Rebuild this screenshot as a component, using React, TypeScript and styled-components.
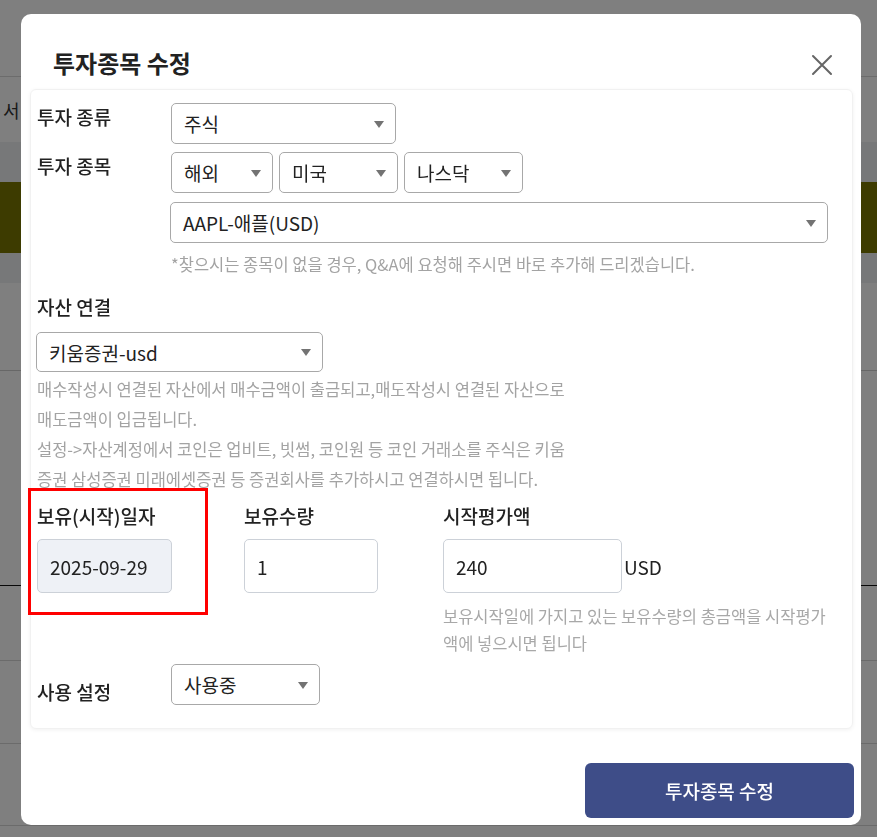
import styled, { createGlobalStyle } from "styled-components"

const GlobalStyle = createGlobalStyle`
  * {
    box-sizing: border-box;
  }
  body {
    margin: 0;
    background: #fff;
    font-family: "Noto Sans CJK KR", "Noto Sans", sans-serif;
  }
`

interface SelectProp {
  text: string
  width: number
  height?: number
}

function FakeSelect({ text, width, height = 41 }: SelectProp) {
  return (
    <SelectBox $w={width} $h={height}>
      {text}
    </SelectBox>
  )
}

function CloseIcon() {
  return (
    <svg width="22" height="22" viewBox="0 0 22 22">
      <path d="M2 2 L20 20 M20 2 L2 20" stroke="#666" strokeWidth="2" strokeLinecap="round" />
    </svg>
  )
}

export default function App() {
  return (
    <>
      <GlobalStyle />
      <Page>
        <TopBar />
        <TabRow>서</TabRow>
        <Band $h={40} />
        <OliveBar />
        <Band $h={30} />
        <ListRow $h={88} $line="#cfcfcf" />
        <ListRow $h={215} $line="#111" />
        <ListRow $h={75} $line="#d6d6d6" />
        <ListRow $h={83} $line="#d6d6d6" />
        <ListRow $h={82} $line="#d6d6d6" />
      </Page>

      <Overlay>
        <Modal>
          <Header>
            <Title>투자종목 수정</Title>
            <CloseBT type="button" aria-label="닫기">
              <CloseIcon />
            </CloseBT>
          </Header>

          <Card>
            <FieldRow>
              <Label>투자 종류</Label>
              <FakeSelect text="주식" width={225} />
            </FieldRow>

            <FieldRow $gap={8}>
              <Label>투자 종목</Label>
              <Stack>
                <SelectGroup>
                  <FakeSelect text="해외" width={102} />
                  <FakeSelect text="미국" width={119} />
                  <FakeSelect text="나스닥" width={119} />
                </SelectGroup>
                <WideSlot>
                  <FakeSelect text="AAPL-애플(USD)" width={658} />
                </WideSlot>
                <Note>*찾으시는 종목이 없을 경우, Q&amp;A에 요청해 주시면 바로 추가해 드리겠습니다.</Note>
              </Stack>
            </FieldRow>

            <Section>
              <Label>자산 연결</Label>
              <SectionSlot>
                <FakeSelect text="키움증권-usd" width={287} height={40} />
              </SectionSlot>
              <Desc>
                매수작성시 연결된 자산에서 매수금액이 출금되고,매도작성시 연결된 자산으로 매도금액이 입금됩니다.
                <br />
                설정-&gt;자산계정에서 코인은 업비트, 빗썸, 코인원 등 코인 거래소를 주식은 키움증권 삼성증권 미래에셋증권 등 증권회사를 추가하시고 연결하시면 됩니다.
              </Desc>
            </Section>

            <Columns>
              <Column $w={207}>
                <Highlight>
                  <Label>보유(시작)일자</Label>
                  <TextInput $w={135} $disabled defaultValue="2025-09-29" readOnly />
                </Highlight>
              </Column>
              <Column $w={199}>
                <Label>보유수량</Label>
                <TextInput $w={134} defaultValue="1" />
              </Column>
              <Column>
                <Label>시작평가액</Label>
                <InputLine>
                  <TextInput $w={179} defaultValue="240" />
                  <Unit>USD</Unit>
                </InputLine>
                <Help>보유시작일에 가지고 있는 보유수량의 총금액을 시작평가액에 넣으시면 됩니다</Help>
              </Column>
            </Columns>

            <FieldRow $gap={7} $align="flex-end">
              <Label>사용 설정</Label>
              <FakeSelect text="사용중" width={149} />
            </FieldRow>
          </Card>

          <Footer>
            <SubmitBT type="button">투자종목 수정</SubmitBT>
          </Footer>
        </Modal>
      </Overlay>
    </>
  )
}

//style

// page behind the modal
const Page = styled.div`
  width: 877px;
  height: 837px;
  overflow: hidden;
  background: #fff;
`
const TopBar = styled.div`
  height: 77px;
  border-bottom: 1px solid #d8d8d8;
`
const TabRow = styled.div`
  display: flex;
  align-items: center;
  height: 65px;
  padding-left: 3px;
  font-size: 18px;
  color: #333;
`
const Band = styled.div<{ $h: number }>`
  height: ${(p) => p.$h}px;
  background: #eff0f2;
`
const OliveBar = styled.div`
  height: 71px;
  background: #7b7600;
`
const ListRow = styled.div<{ $h: number; $line: string }>`
  height: ${(p) => p.$h}px;
  border-bottom: 1px solid ${(p) => p.$line};
`

// modal
const Overlay = styled.div`
  position: fixed;
  inset: 0;
  z-index: 100;
  display: flex;
  align-items: flex-start;
  padding: 14px 16px 12px 21px;
  background: rgba(0, 0, 0, 0.5);
`
const Modal = styled.div`
  display: flex;
  flex-direction: column;
  width: 840px;
  height: 811px;
  padding: 0 8px 7px 9px;
  border-radius: 10px;
  background: #fff;
`
const Header = styled.div`
  display: flex;
  align-items: center;
  justify-content: space-between;
  height: 75px;
  padding: 22px 20px 0 23px;
`
const Title = styled.h2`
  margin: 0;
  font-size: 24px;
  font-weight: 700;
  color: #222;
`
const CloseBT = styled.button`
  display: flex;
  margin-top: 4px;
  padding: 0;
  border: none;
  background: none;
  cursor: pointer;
`
const Card = styled.div`
  padding: 13px 14px 23px 6px;
  border: 1px solid #f1f1f1;
  border-radius: 6px;
  background: #fff;
  box-shadow: 0 1px 4px rgba(0, 0, 0, 0.06);
`
const FieldRow = styled.div<{ $gap?: number; $align?: string }>`
  display: flex;
  align-items: ${(p) => p.$align || "flex-start"};
  margin-top: ${(p) => p.$gap || 0}px;
`
const Label = styled.div`
  flex-shrink: 0;
  width: 134px;
  font-size: 19px;
  font-weight: 500;
  line-height: 27px;
  color: #222;
  white-space: nowrap;
`
const SelectBox = styled.div<{ $w: number; $h: number }>`
  position: relative;
  display: flex;
  align-items: center;
  width: ${(p) => p.$w}px;
  height: ${(p) => p.$h}px;
  padding: 0 30px 0 12px;
  border: 1px solid #a8a8a8;
  border-radius: 5px;
  background: #fff;
  font-size: 19px;
  color: #222;

  &::after {
    content: "";
    position: absolute;
    top: 50%;
    right: 11px;
    margin-top: -3px;
    border-left: 5.5px solid transparent;
    border-right: 5.5px solid transparent;
    border-top: 7px solid #737373;
  }
`
const Stack = styled.div`
  display: flex;
  flex-direction: column;
`
const SelectGroup = styled.div`
  display: flex;
  gap: 6px;
`
const WideSlot = styled.div`
  margin: 9px 0 0 -1px;
`
const Note = styled.p`
  margin: 10px 0 0;
  font-size: 16.5px;
  line-height: 22px;
  color: #a3a3a3;
`
const Section = styled.div`
  margin-top: 18px;
`
const SectionSlot = styled.div`
  margin: 12px 0 0 -1px;
`
const Desc = styled.p`
  width: 530px;
  margin: 2px 0 0;
  font-size: 16.5px;
  line-height: 30px;
  color: #a3a3a3;
`
const Columns = styled.div`
  display: flex;
  margin-top: 8px;
`
const Column = styled.div<{ $w?: number }>`
  display: flex;
  flex-direction: column;
  flex: ${(p) => (p.$w ? `0 0 ${p.$w}px` : "1")};
`
const Highlight = styled.div`
  position: relative;
  display: flex;
  flex-direction: column;

  &::after {
    content: "";
    position: absolute;
    top: -14px;
    left: -9px;
    right: 36px;
    bottom: -22px;
    border: 3px solid #f00;
    pointer-events: none;
  }
`
const TextInput = styled.input<{ $w: number; $disabled?: boolean }>`
  width: ${(p) => p.$w}px;
  height: 54px;
  margin-top: 10px;
  padding: 0 12px;
  border: 1px solid #ccd1d8;
  border-radius: 5px;
  background: ${(p) => (p.$disabled ? "#eef1f6" : "#fff")};
  font-family: inherit;
  font-size: 19px;
  color: #222;
  outline: none;
`
const InputLine = styled.div`
  display: flex;
  align-items: flex-end;
`
const Unit = styled.span`
  margin: 0 0 13px 2px;
  font-size: 19px;
  line-height: 27px;
  color: #222;
`
const Help = styled.p`
  max-width: 392px;
  margin: 10px 0 0;
  font-size: 16.5px;
  line-height: 27px;
  color: #a8a8a8;
`
const Footer = styled.div`
  display: flex;
  flex: 1;
  align-items: flex-end;
  justify-content: flex-end;
`
const SubmitBT = styled.button`
  width: 269px;
  height: 55px;
  margin-right: -1px;
  border: none;
  border-radius: 6px;
  background: #3e4d88;
  font-family: inherit;
  font-size: 19px;
  font-weight: 500;
  color: #fff;
  cursor: pointer;
`
